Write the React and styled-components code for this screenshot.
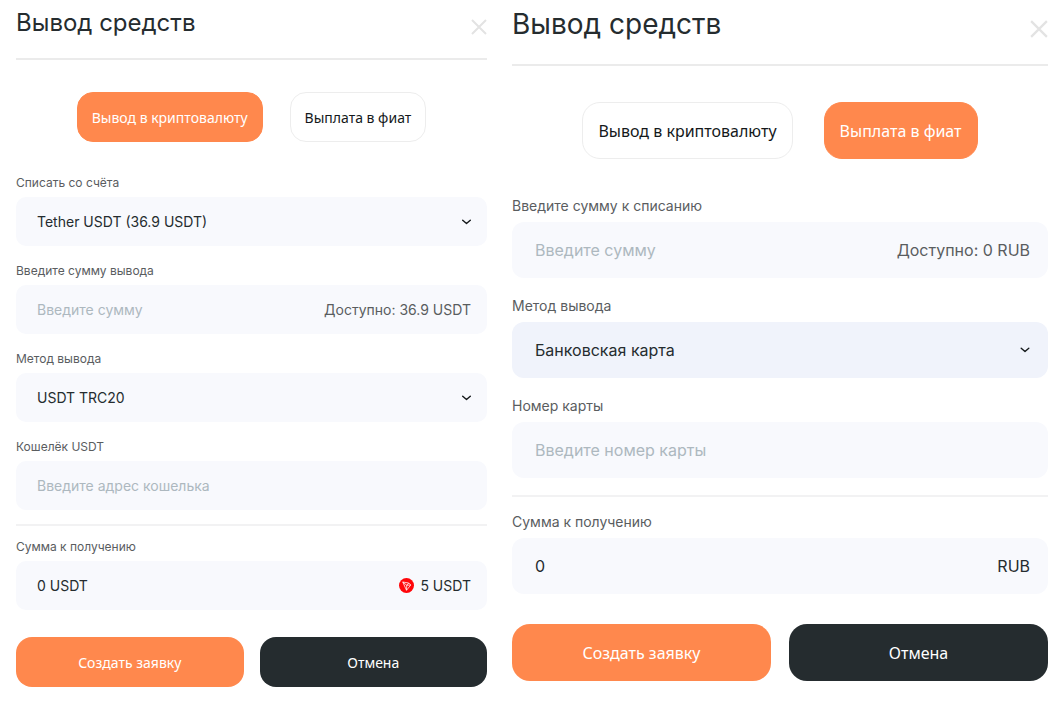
import React, { useState } from "react";
import styled, { createGlobalStyle, ThemeProvider } from "styled-components";

const GlobalStyle = createGlobalStyle`
	* {
		box-sizing: border-box;
	}

	body {
		margin: 0;
		background: #fff;
		color: #252c2f;
		font-family: Inter, "Liberation Sans", sans-serif;
	}

	button,
	input,
	select {
		font-family: inherit;
		margin: 0;
		padding: 0;
		border: none;
		background: none;
		outline: none;
	}
`;

// two densities of the same form
const compact = {
	title: 24,
	titleLine: 32,
	headTop: 7,
	headBottom: 19,
	close: 16,
	tabsTop: 32,
	tabsBottom: 32,
	tabsGap: 27,
	tabPadding: 14,
	label: 12,
	labelLine: 18,
	labelGap: 5,
	text: 14,
	button: 14,
	field: 49,
	control: 50,
	fieldGap: 16,
	rowGap: 12,
	fieldRadius: 10,
	radius: 16,
	paddingLeft: 21,
	paddingRight: 16,
	chevron: 9,
	actionsTop: 27,
	actionsGap: 16
};

const regular = {
	title: 28,
	titleLine: 36,
	headTop: 6,
	headBottom: 22,
	close: 18,
	tabsTop: 36,
	tabsBottom: 37,
	tabsGap: 31,
	tabPadding: 15,
	label: 14,
	labelLine: 20,
	labelGap: 6,
	text: 16,
	button: 16,
	field: 56,
	control: 57,
	fieldGap: 18,
	rowGap: 15,
	fieldRadius: 12,
	radius: 18,
	paddingLeft: 23,
	paddingRight: 18,
	chevron: 10,
	actionsTop: 30,
	actionsGap: 18
};

const Page = styled.main`
	display: grid;
	grid-template-columns: 471fr 536fr;
	align-items: start;
	gap: 25px;
	padding: 0 11px 0 16px;
`;

const Panel = styled.form`
	min-width: 0;
`;

const Header = styled.header`
	display: flex;
	align-items: flex-end;
	justify-content: space-between;
	padding: ${p => p.theme.headTop}px 0 ${p => p.theme.headBottom}px;
	border-bottom: 2px solid #ebebeb;
`;

const Title = styled.h1`
	margin: 0;
	font-size: ${p => p.theme.title}px;
	line-height: ${p => p.theme.titleLine}px;
	font-weight: 400;
`;

const CloseButton = styled.button`
	display: flex;
	padding: 4px 0;
	color: #e3e3e3;
	cursor: pointer;

	svg {
		width: ${p => p.theme.close}px;
		height: ${p => p.theme.close}px;
	}
`;

const Tabs = styled.div`
	display: flex;
	justify-content: center;
	gap: ${p => p.theme.tabsGap}px;
	padding: ${p => p.theme.tabsTop}px 0 ${p => p.theme.tabsBottom}px;
`;

const BaseButton = styled.button`
	height: ${p => p.theme.control}px;
	border-radius: ${p => p.theme.radius}px;
	font-family: "Noto Sans", "Open Sans", sans-serif;
	font-size: ${p => p.theme.button}px;
	white-space: nowrap;
	cursor: pointer;
`;

const Tab = styled(BaseButton)`
	padding: 0 ${p => p.theme.tabPadding}px;
	border: 1px solid ${p => (p.$active ? "#ff884d" : "#ededed")};
	background: ${p => (p.$active ? "#ff884d" : "#fff")};
	color: ${p => (p.$active ? "#fff" : "#15191b")};
`;

const Fields = styled.div`
	display: grid;
	gap: ${p => p.theme.fieldGap}px;
`;

const Label = styled.label`
	display: block;
	margin-bottom: ${p => p.theme.labelGap}px;
	color: #5a5d5f;
	font-size: ${p => p.theme.label}px;
	line-height: ${p => p.theme.labelLine}px;
`;

const Box = styled.div`
	display: flex;
	align-items: center;
	height: ${p => p.theme.field}px;
	padding: 0 ${p => p.theme.paddingRight}px 0 ${p => p.theme.paddingLeft}px;
	border-radius: ${p => p.theme.fieldRadius}px;
	background: ${p => (p.$focused ? "#f0f3fb" : "#f8f9fd")};
	font-size: ${p => p.theme.text}px;
`;

const Input = styled.input`
	flex: 1;
	min-width: 0;
	height: 100%;
	color: #252c2f;
	font-size: inherit;

	&::placeholder {
		color: #adb8bf;
		opacity: 1;
	}
`;

const Select = styled.select`
	flex: 1;
	min-width: 0;
	height: 100%;
	appearance: none;
	color: #252c2f;
	font-size: inherit;
`;

const Suffix = styled.span`
	display: flex;
	align-items: center;
	gap: 6px;
	color: ${p => (p.$muted ? "#5a5d5f" : "#252c2f")};
	white-space: nowrap;
`;

const Chevron = styled.svg`
	width: ${p => p.theme.chevron}px;
	height: 6px;
	pointer-events: none;
`;

const Divider = styled.hr`
	height: 2px;
	margin: ${p => p.theme.rowGap + 2}px 0 ${p => p.theme.rowGap}px;
	border: none;
	background: #f2f2f3;
`;

const Actions = styled.div`
	display: grid;
	grid-template-columns: 1fr 1fr;
	gap: ${p => p.theme.actionsGap}px;
	margin-top: ${p => p.theme.actionsTop}px;
`;

const Action = styled(BaseButton)`
	background: ${p => (p.$primary ? "#ff884d" : "#252c2f")};
	color: #fff;
`;

const CloseIcon = () => (
	<svg viewBox="0 0 16 16" fill="none" stroke="currentColor" strokeWidth="2">
		<path d="M1 1l14 14M15 1L1 15" />
	</svg>
);

const Arrow = () => (
	<Chevron viewBox="0 0 9 6" fill="none" stroke="#15191b" strokeWidth="1.4">
		<path
			d="M.7 1.200L4.500 4.500l3.800-3.300"
			strokeLinecap="round"
			strokeLinejoin="round"
		/>
	</Chevron>
);

const TronIcon = () => (
	<svg width="15" height="15" viewBox="0 0 30 30" fill="none">
		<circle cx="15" cy="15" r="15" fill="#ff060a" />
		<path
			d="M7.500 8l12 2 4 4-8.500 10.500L7.500 8zM7.500 8l8 6.500L15 24.500M15.500 14.500l4-4.500M15.500 14.500l8-.5"
			stroke="#fff"
			strokeWidth="1.500"
			strokeLinejoin="round"
		/>
	</svg>
);

const InputField = ({ id, label, suffix, muted, ...rest }) => (
	<div>
		<Label htmlFor={id}>{label}</Label>
		<Box>
			<Input id={id} type="text" {...rest} />
			{suffix && <Suffix $muted={muted}>{suffix}</Suffix>}
		</Box>
	</div>
);

const SelectField = ({ id, label, option, focused }) => (
	<div>
		<Label htmlFor={id}>{label}</Label>
		<Box $focused={focused}>
			<Select id={id}>
				<option>{option}</option>
			</Select>
			<Arrow />
		</Box>
	</div>
);

const WithdrawForm = ({ theme, initialTab, total, children }) => {
	const [tab, setTab] = useState(initialTab);
	const onSubmit = e => {
		e.preventDefault();
	};

	return (
		<ThemeProvider theme={theme}>
			<Panel onSubmit={onSubmit}>
				<Header>
					<Title>Вывод средств</Title>
					<CloseButton type="button" aria-label="Закрыть">
						<CloseIcon />
					</CloseButton>
				</Header>
				<Tabs>
					<Tab
						type="button"
						$active={tab === "crypto"}
						onClick={() => setTab("crypto")}
					>
						Вывод в криптовалюту
					</Tab>
					<Tab
						type="button"
						$active={tab === "fiat"}
						onClick={() => setTab("fiat")}
					>
						Выплата в фиат
					</Tab>
				</Tabs>
				<Fields>{children}</Fields>
				<Divider />
				{total}
				<Actions>
					<Action type="submit" $primary>
						Создать заявку
					</Action>
					<Action type="button">Отмена</Action>
				</Actions>
			</Panel>
		</ThemeProvider>
	);
};

const App = () => (
	<>
		<GlobalStyle />
		<Page>
			<WithdrawForm
				theme={compact}
				initialTab="crypto"
				total={
					<InputField
						id="crypto-total"
						label="Сумма к получению"
						value="0 USDT"
						readOnly
						suffix={
							<>
								<TronIcon />5 USDT
							</>
						}
					/>
				}
			>
				<SelectField
					id="account"
					label="Списать со счёта"
					option="Tether USDT (36.9 USDT)"
				/>
				<InputField
					id="crypto-amount"
					label="Введите сумму вывода"
					placeholder="Введите сумму"
					suffix="Доступно: 36.9 USDT"
					muted
				/>
				<SelectField
					id="crypto-method"
					label="Метод вывода"
					option="USDT TRC20"
				/>
				<InputField
					id="wallet"
					label="Кошелёк USDT"
					placeholder="Введите адрес кошелька"
				/>
			</WithdrawForm>
			<WithdrawForm
				theme={regular}
				initialTab="fiat"
				total={
					<InputField
						id="fiat-total"
						label="Сумма к получению"
						value="0"
						readOnly
						suffix="RUB"
					/>
				}
			>
				<InputField
					id="fiat-amount"
					label="Введите сумму к списанию"
					placeholder="Введите сумму"
					suffix="Доступно: 0 RUB"
					muted
				/>
				<SelectField
					id="fiat-method"
					label="Метод вывода"
					option="Банковская карта"
					focused
				/>
				<InputField
					id="card"
					label="Номер карты"
					placeholder="Введите номер карты"
				/>
			</WithdrawForm>
		</Page>
	</>
);

export default App;
